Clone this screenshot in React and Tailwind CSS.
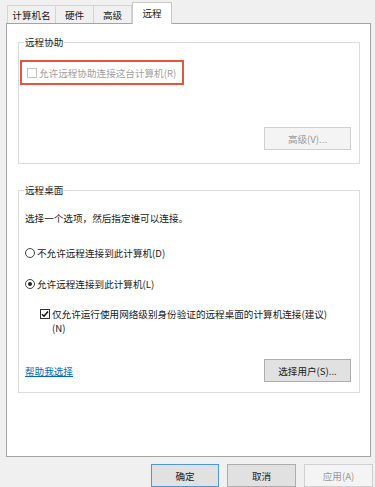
import React from 'react';

const font = { fontFamily: '"Noto Sans CJK SC", "Microsoft YaHei", sans-serif' };

const Tab = ({ label, active, className = '' }) =>
  active ? (
    <div className="h-[22px] w-[40px] bg-white border border-b-0 border-[#c8c8c8] flex items-start justify-center pt-[3px] leading-[14px] text-[#1a1a1a]">
      {label}
    </div>
  ) : (
    <div className={`h-[18px] bg-[#f0f0f0] border-t border-l border-[#d4d4d4] flex items-center justify-center leading-[14px] text-[#1a1a1a] ${className}`}>
      {label}
    </div>
  );

const Radio = ({ checked }) => (
  <span className="w-[10px] h-[10px] rounded-full border border-[#444] bg-white flex items-center justify-center shrink-0">
    {checked && <span className="w-[4px] h-[4px] rounded-full bg-[#222]" />}
  </span>
);

const Check = ({ checked, disabled }) => (
  <span
    className={`w-[10px] h-[10px] border flex items-center justify-center shrink-0 bg-white ${
      disabled ? 'border-[#c4c4c4]' : 'border-[#333]'
    }`}
  >
    {checked && (
      <svg width="8" height="8" viewBox="0 0 8 8">
        <path d="M1 4.2 L3 6.2 L7 1.6" fill="none" stroke="#111" strokeWidth="1.5" />
      </svg>
    )}
  </span>
);

const Btn = ({ children, disabled, primary, className = '' }) => (
  <div
    className={`h-[23px] flex items-center justify-center border leading-[14px] ${
      disabled
        ? 'bg-[#f4f4f4] border-[#d0d0d0] text-[#9a9a9a]'
        : primary
        ? 'bg-[#e1e1e1] border-[#4a98e0] text-[#1a1a1a]'
        : 'bg-[#e1e1e1] border-[#adadad] text-[#1a1a1a]'
    } ${className}`}
  >
    {children}
  </div>
);

export default function App() {
  return (
    <div className="w-[375px] h-[487px] overflow-hidden bg-[#f0f0f0] flex flex-col text-[9.6px]" style={font}>
      {/* Tabs */}
      <div className="h-[24px] pl-[7px] pt-[2px] flex items-end relative z-10">
        <div className="flex items-end h-[22px]">
          <div className="flex items-start h-[22px] pt-[3px]">
            <Tab label="计算机名" className="w-[48px]" />
            <Tab label="硬件" className="w-[38px]" />
            <Tab label="高级" className="w-[39px] border-r" />
          </div>
          <Tab label="远程" active />
        </div>
      </div>

      {/* Panel */}
      <div className="ml-[6px] mt-[-1px] w-[365px] h-[435px] bg-white border border-[#a3a3a3] pl-[11px] flex flex-col">
        <fieldset className="mt-[11px] w-[342px] border border-[#dcdcdc] flex flex-col">
          <legend className="ml-[5px] px-[1px] leading-[14px] text-[#1a1a1a]">远程协助</legend>
          <div className="mt-[11px] ml-[1px] w-[164px] h-[25px] border-2 border-[#e8553e] flex items-center pl-[5px] gap-[2px]">
            <Check disabled />
            <span className="leading-[14px] text-[#a0a0a0]">允许远程协助连接这台计算机(R)</span>
          </div>
          <div className="mt-[42px] pr-[8px] pb-[13px] flex justify-end">
            <Btn disabled className="w-[87px]">高级(V)...</Btn>
          </div>
        </fieldset>

        <fieldset className="mt-[19px] w-[342px] border border-[#dcdcdc] flex flex-col pl-[6px] text-[#1a1a1a]">
          <legend className="ml-[-1px] px-[1px] leading-[14px]">远程桌面</legend>
          <div className="mt-[14px] leading-[14px]">选择一个选项，然后指定谁可以连接。</div>
          <div className="mt-[21px] flex items-center gap-[2px] leading-[14px]">
            <Radio />
            <span>不允许远程连接到此计算机(D)</span>
          </div>
          <div className="mt-[17px] flex items-center gap-[2px] leading-[14px]">
            <Radio checked />
            <span>允许远程连接到此计算机(L)</span>
          </div>
          <div className="mt-[16px] ml-[15px] flex items-start gap-[2px] leading-[14px]">
            <span className="mt-[2px]">
              <Check checked />
            </span>
            <span className="w-[280px]">仅允许运行使用网络级别身份验证的远程桌面的计算机连接(建议)<br />(N)</span>
          </div>
          <div className="mt-[24px] pr-[8px] pb-[10px] flex items-center justify-between">
            <span className="text-[#0066cc] underline leading-[14px]">帮助我选择</span>
            <Btn className="w-[87px]">选择用户(S)...</Btn>
          </div>
        </fieldset>
      </div>

      {/* Dialog buttons */}
      <div className="mt-[7px] pr-[2px] flex justify-end gap-[8px]">
        <Btn primary className="w-[68px]">确定</Btn>
        <Btn className="w-[69px]">取消</Btn>
        <Btn disabled className="w-[69px]">应用(A)</Btn>
      </div>
    </div>
  );
}
